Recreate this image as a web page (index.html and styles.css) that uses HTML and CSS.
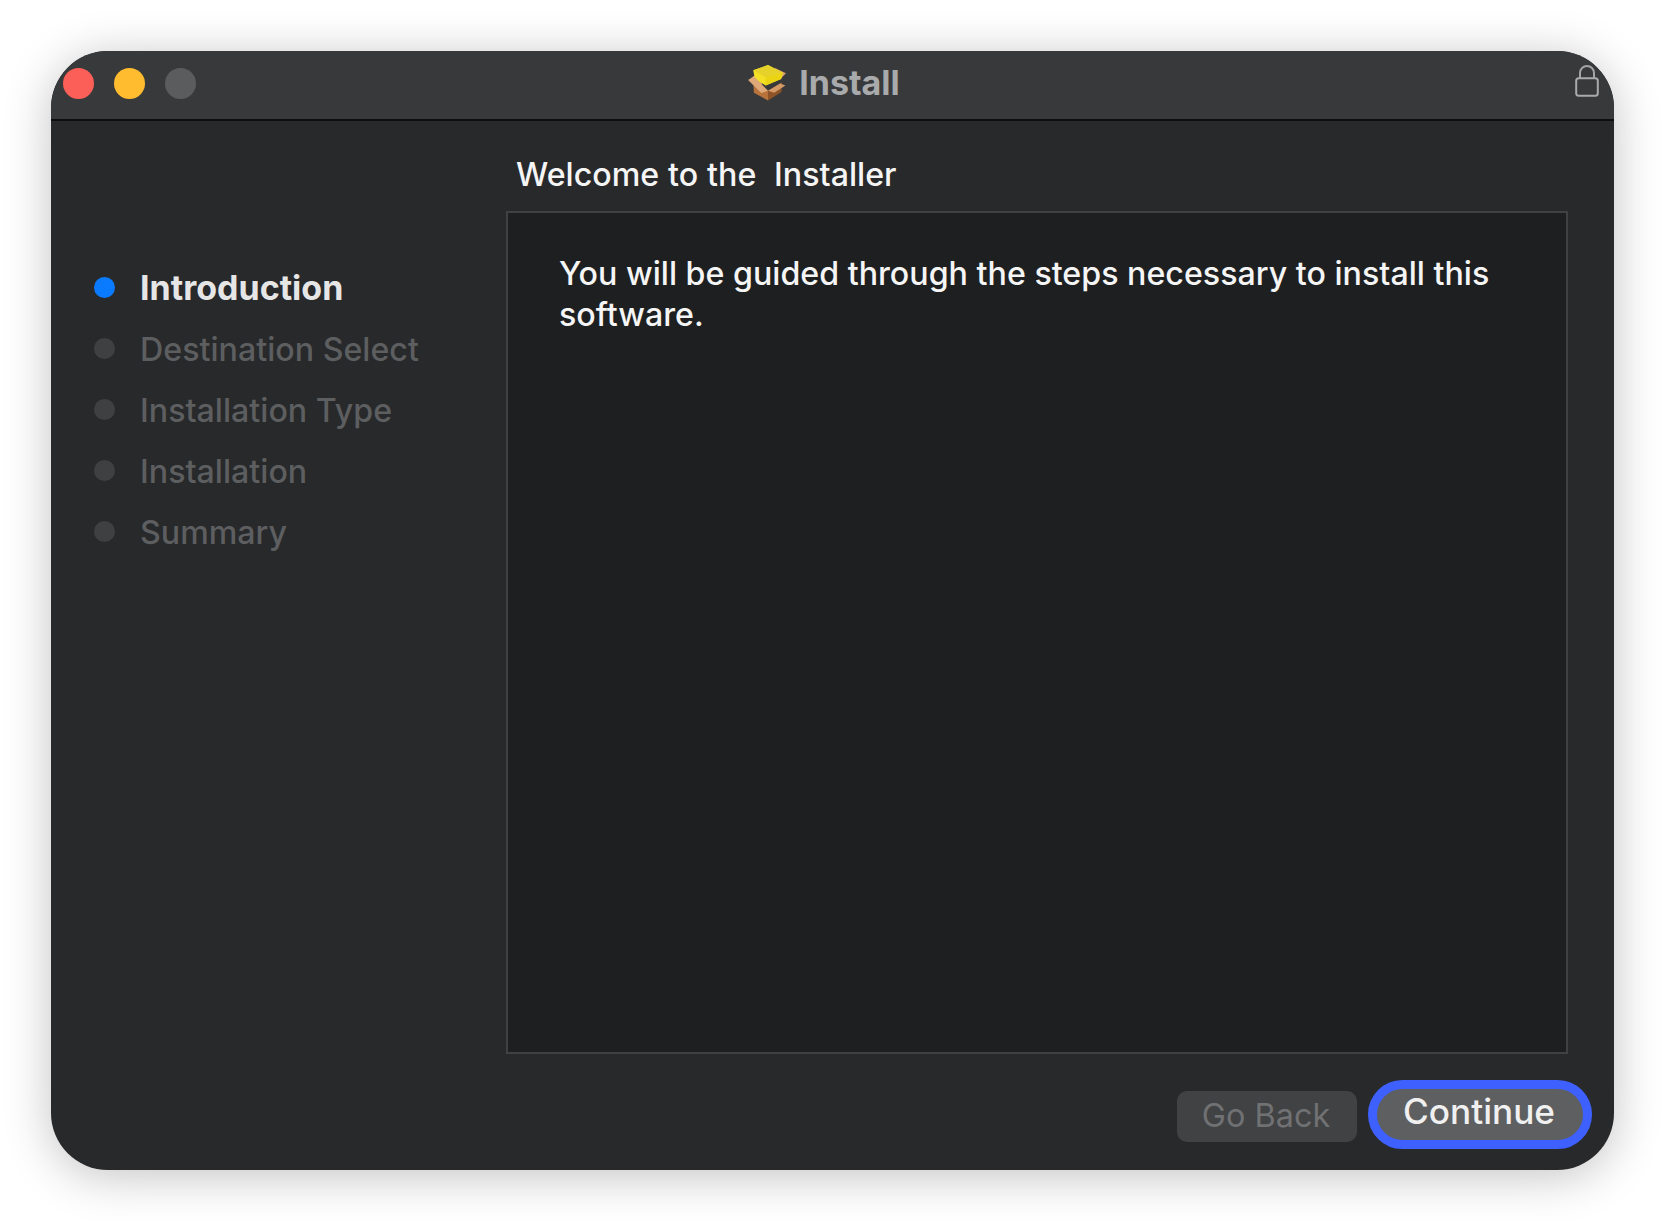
FILE: index.html
```html
<!DOCTYPE html>
<html lang="en">
<head>
<meta charset="utf-8">
<title>Install</title>
<link rel="stylesheet" href="styles.css">
</head>
<body>
<div class="window">
  <header class="titlebar">
    <div class="lights">
      <span class="light red"></span>
      <span class="light yellow"></span>
      <span class="light gray"></span>
    </div>
    <div class="title">
      <svg class="pkg" viewBox="15 12 122 118" aria-hidden="true">
        <path d="M34 68 L79 96 L79 126 L36 102 Z" fill="#b8733c"/>
        <path d="M79 96 L122 70 L120 100 L79 126 Z" fill="#8e5428"/>
        <path d="M99 26 L134 43 L119 58 Z" fill="#d9a06c"/>
        <path d="M19 63 L38 50 L60 70 L59 103 Z" fill="#dea878"/>
        <path d="M34 34 L79 18 L124 41 L119 60 L72 80 L39 60 Z" fill="#f4e024"/>
        <path d="M34 34 L79 18 L124 41 L72 56 Z" fill="#e6d22a"/>
        <path d="M72 56 L124 41 L119 60 L72 80 Z" fill="#ead414"/>
        <path d="M19 63 L40 56 L79 96 L59 103 Z" fill="#dea878"/>
        <path d="M79 96 L116 74 L132 80 L98 102 Z" fill="#d39a68"/>
      </svg>
      <span>Install</span>
    </div>
    <svg class="lock" viewBox="0 0 24 33" aria-hidden="true">
      <path d="M5 15 V9 a7 7 0 0 1 14 0 V15" fill="none" stroke="#a3a4a5" stroke-width="2"/>
      <rect x="1.2" y="14.2" width="21.6" height="17.6" rx="2.5" fill="none" stroke="#a9aaab" stroke-width="2"/>
    </svg>
  </header>
  <main class="main">
    <nav class="steps">
      <div class="step active"><span class="dot"></span>Introduction</div>
      <div class="step"><span class="dot"></span>Destination Select</div>
      <div class="step"><span class="dot"></span>Installation Type</div>
      <div class="step"><span class="dot"></span>Installation</div>
      <div class="step"><span class="dot"></span>Summary</div>
    </nav>
    <section class="content">
      <h1 class="heading">Welcome to the&nbsp; Installer</h1>
      <div class="panel">
        <p class="message">You will be guided through the steps necessary to install this software.</p>
      </div>
      <div class="actions">
        <button class="btn back" type="button">Go Back</button>
        <button class="btn primary" type="button">Continue</button>
      </div>
    </section>
  </main>
</div>
</body>
</html>
```
FILE: styles.css
```css
* { box-sizing: border-box; }
html, body { margin: 0; padding: 0; }
body {
  width: 1665px;
  height: 1221px;
  background: #fff;
  padding: 51px 51px 0;
  overflow: hidden;
  font-family: Inter, "Liberation Sans", sans-serif;
}
.window {
  width: 1563px;
  height: 1119px;
  border-radius: 57px;
  background: #28292b;
  box-shadow: 0 6px 48px rgba(0, 0, 0, 0.24);
  overflow: hidden;
  display: flex;
  flex-direction: column;
}
.titlebar {
  height: 70px;
  flex: none;
  background: #38393b;
  border-bottom: 2px solid #0e0e0f;
  display: grid;
  grid-template-columns: 1fr auto 1fr;
  align-items: center;
}
.lights {
  display: flex;
  gap: 20px;
  padding-left: 12px;
  padding-bottom: 3px;
}
.light { width: 31px; height: 31px; border-radius: 50%; }
.red { background: #fc5f57; }
.yellow { background: #febc2e; }
.gray { background: #5b5c5e; }
.title {
  display: flex;
  align-items: center;
  gap: 12px;
  font-size: 34px;
  font-weight: 700;
  color: #a9aaab;
  padding-right: 18px;
  padding-bottom: 6px;
}
.pkg { width: 40px; height: 39px; }
.lock {
  width: 24px;
  height: 33px;
  justify-self: end;
  margin-right: 15px;
  margin-bottom: 9px;
}
.main {
  flex: 1;
  display: flex;
  min-height: 0;
}
.steps {
  width: 455px;
  flex: none;
  padding: 136px 0 0 43px;
}
.step {
  height: 61px;
  display: flex;
  align-items: center;
  gap: 25px;
  font-size: 32.2px;
  font-weight: 500;
  color: #5d5e60;
  padding-top: 1px;
}
.step.active { color: #e6e6e6; font-weight: 700; font-size: 34px; padding-top: 0; }
.dot {
  width: 21px;
  height: 21px;
  border-radius: 50%;
  background: #3f4042;
  flex: none;
  margin-top: -1px;
}
.active .dot { background: #0a7bff; margin-top: 0; }
.content { flex: 1; min-width: 0; display: flex; flex-direction: column; }
.heading {
  margin: 33px 0 17px;
  padding-left: 10px;
  padding-top: 1px;
  font-size: 32.2px;
  line-height: 39px;
  word-spacing: 0.3px;
  font-weight: 500;
  color: #f5f5f5;
}
.panel {
  height: 843px;
  margin-right: 46px;
  border: 2px solid #404143;
  background: #1e1f21;
  padding: 41px 51px;
}
.message {
  margin: 0;
  font-size: 32.2px;
  line-height: 40.5px;
  font-weight: 500;
  color: #f5f5f5;
}
.actions {
  display: flex;
  justify-content: flex-end;
  align-items: flex-end;
  gap: 11px;
  margin-top: 26px;
  padding-right: 22px;
}
.btn {
  font-family: inherit;
  font-size: 32.4px;
  padding: 0;
}
.back {
  width: 180px;
  height: 51px;
  margin-bottom: 7px;
  border: 0;
  border-radius: 10px;
  background: #414244;
  color: #707173;
  padding-bottom: 3px;
  padding-right: 2px;
}
.primary {
  width: 224px;
  height: 69px;
  border: 9px solid #3d60ff;
  border-radius: 35px;
  background: #5e5f61;
  color: #f0f0f0;
  font-size: 35.2px;
  font-weight: 500;
  padding-bottom: 8px;
  padding-right: 2px;
}
```
